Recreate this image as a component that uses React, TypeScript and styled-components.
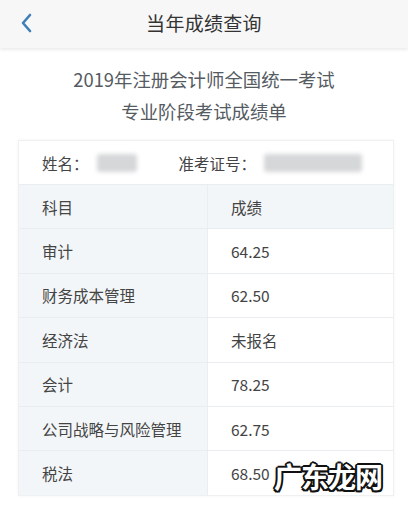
import React from "react";
import styled, { createGlobalStyle } from "styled-components";

const Global = createGlobalStyle`
  html, body { margin: 0; padding: 0; background: #ffffff; }
  body { font-family: "Noto Sans CJK SC", "Noto Sans", sans-serif; width: 408px; height: 508px; overflow: hidden; }
`;

const Page = styled.div`
  width: 408px;
  height: 508px;
  display: flex;
  flex-direction: column;
  background: #ffffff;
  position: relative;
`;

const NavBar = styled.div`
  height: 48px;
  flex: 0 0 48px;
  background: #f7f7f7;
  box-shadow: 0 2px 3px rgba(0, 0, 0, 0.08);
  display: flex;
  align-items: center;
  justify-content: center;
  position: relative;
`;

const BackButton = styled.div`
  position: absolute;
  left: 16px;
  top: 11px;
  width: 20px;
  height: 24px;
  display: flex;
  align-items: center;
  justify-content: center;
`;

const NavTitle = styled.div`
  font-size: 19px;
  color: #333333;
  letter-spacing: 0.3px;
  margin-top: -3px;
`;

const Heading = styled.div`
  display: flex;
  flex-direction: column;
  align-items: center;
  padding-top: 18px;
  gap: 6px;
  color: #555b62;
  font-size: 18.4px;
  line-height: 26px;
`;

const Card = styled.div`
  margin: 16px 14px 0 18px;
  border: 1px solid #eef0f2;
  box-shadow: 0 0 3px rgba(0, 0, 0, 0.05);
  display: flex;
  flex-direction: column;
`;

const InfoRow = styled.div`
  height: 43px;
  display: flex;
  align-items: center;
  padding-left: 23px;
  font-size: 15.5px;
  color: #444444;
  background: #ffffff;
`;

const Label = styled.span<{ $gap?: number }>`
  margin-left: ${(p) => p.$gap ?? 0}px;
`;

const Blur = styled.span<{ $w: number }>`
  display: inline-block;
  width: ${(p) => p.$w}px;
  height: 18px;
  margin-left: 8px;
  background: #d6d7d9;
  border-radius: 3px;
  filter: blur(2px);
`;

const Row = styled.div`
  box-sizing: border-box;
  display: grid;
  grid-template-columns: 189px 1fr;
  height: 44.4px;
  border-top: 1px solid #e9edf0;
  font-size: 15.5px;
  color: #444444;
`;

const Cell = styled.div<{ $head?: boolean; $left?: boolean }>`
  display: flex;
  align-items: center;
  padding-left: 23px;
  background: ${(p) => (p.$head || p.$left ? "#f3f6f9" : "#ffffff")};
  border-right: ${(p) => (p.$left ? "1px solid #eaeef1" : "none")};
`;

const Watermark = styled.span`
  position: absolute;
  left: 274px;
  top: 456px;
  font-size: 28px;
  font-weight: 700;
  color: #ffffff;
  letter-spacing: -1px;
  font-family: "Noto Sans CJK SC", sans-serif;
  text-shadow:
    2px 0 0 #111, -2px 0 0 #111, 0 2px 0 #111, 0 -2px 0 #111,
    1.5px 1.5px 0 #111, -1.5px -1.5px 0 #111, 1.5px -1.5px 0 #111, -1.5px 1.5px 0 #111;
`;

const rows: [string, string][] = [
  ["审计", "64.25"],
  ["财务成本管理", "62.50"],
  ["经济法", "未报名"],
  ["会计", "78.25"],
  ["公司战略与风险管理", "62.75"],
  ["税法", "68.50"],
];

export default function App() {
  return (
    <Page>
      <Global />
      <NavBar>
        <BackButton>
          <svg width="12" height="20" viewBox="0 0 12 20">
            <path d="M10 2 L3 10 L10 18" fill="none" stroke="#3f7fb8" strokeWidth="2.6" strokeLinecap="round" strokeLinejoin="round" />
          </svg>
        </BackButton>
        <NavTitle>当年成绩查询</NavTitle>
      </NavBar>
      <Heading>
        <div>2019年注册会计师全国统一考试</div>
        <div>专业阶段考试成绩单</div>
      </Heading>
      <Card>
        <InfoRow>
          <Label>姓名：</Label>
          <Blur $w={40} />
          <Label $gap={42}>准考证号：</Label>
          <Blur $w={98} />
        </InfoRow>
        <Row>
          <Cell $head $left>科目</Cell>
          <Cell $head>成绩</Cell>
        </Row>
        {rows.map(([s, v]) => (
          <Row key={s}>
            <Cell $left>{s}</Cell>
            <Cell>{v}</Cell>
          </Row>
        ))}
      </Card>
      <Watermark>广东龙网</Watermark>
    </Page>
  );
}
